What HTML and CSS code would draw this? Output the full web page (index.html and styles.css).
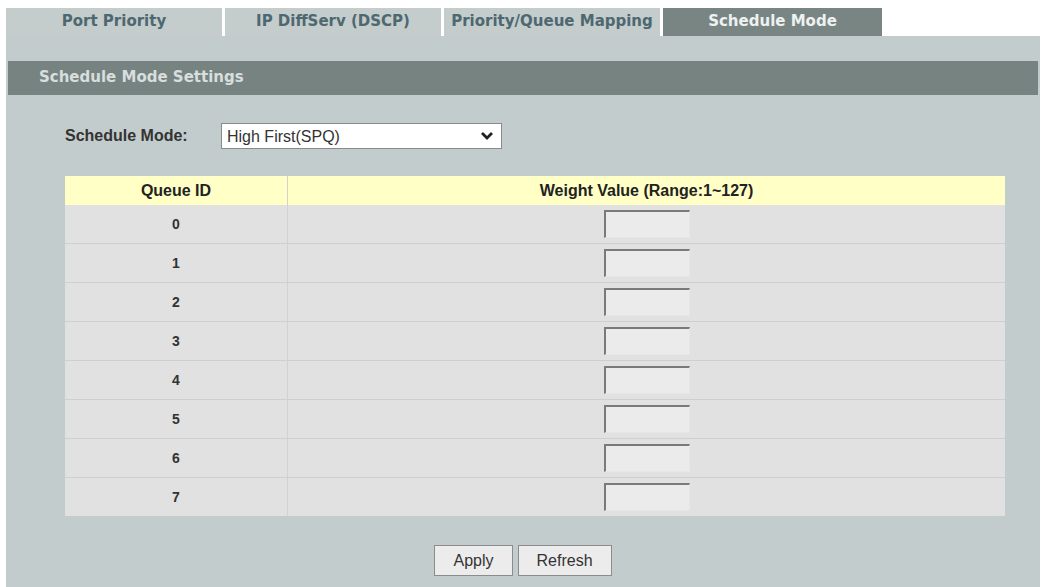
FILE: index.html
```html
<!DOCTYPE html>
<html lang="en">
<head>
  <meta charset="UTF-8">
  <meta name="viewport" content="width=device-width, initial-scale=1.0">
  <title>Schedule Mode</title>
  <link rel="stylesheet" href="styles.css">
</head>
<body>
  <div class="tabs">
    <div class="tab">Port Priority</div>
    <div class="tab">IP DiffServ (DSCP)</div>
    <div class="tab">Priority/Queue Mapping</div>
    <div class="tab active">Schedule Mode</div>
  </div>

  <div class="panel">
    <div class="panelTitulo">Schedule Mode Settings</div>

    <div class="filaModo">
      <label for="modo">Schedule Mode:</label>
      <div class="selectCaja">
        <select id="modo">
          <option>High First(SPQ)</option>
          <option>WRR</option>
        </select>
        <svg class="flecha" width="14" height="10" viewBox="0 0 14 10">
          <path d="M2 2 L7 7 L12 2" fill="none" stroke="#222" stroke-width="2.8"/>
        </svg>
      </div>
    </div>

    <table class="tablaColas">
      <thead>
        <tr>
          <th class="colId">Queue ID</th>
          <th>Weight Value (Range:1~127)</th>
        </tr>
      </thead>
      <tbody>
        <tr><td class="colId">0</td><td><input type="text"></td></tr>
        <tr><td class="colId">1</td><td><input type="text"></td></tr>
        <tr><td class="colId">2</td><td><input type="text"></td></tr>
        <tr><td class="colId">3</td><td><input type="text"></td></tr>
        <tr><td class="colId">4</td><td><input type="text"></td></tr>
        <tr><td class="colId">5</td><td><input type="text"></td></tr>
        <tr><td class="colId">6</td><td><input type="text"></td></tr>
        <tr><td class="colId">7</td><td><input type="text"></td></tr>
      </tbody>
    </table>

    <div class="botones">
      <button>Apply</button>
      <button>Refresh</button>
    </div>
  </div>
</body>
</html>
```

FILE: styles.css
```css
body {
  margin: 0;
  background: #ffffff;
  font-family: "Liberation Sans", Arial, sans-serif;
}

.tabs {
  display: flex;
  gap: 3px;
  margin: 8px 0 0 6px;
}
.tab {
  width: 216px;
  height: 28px;
  line-height: 27px;
  text-align: center;
  background: #c4cccc;
  color: #4d6870;
  font-family: "DejaVu Sans", Verdana, sans-serif;
  font-weight: bold;
  font-size: 15px;
}
.tab.active {
  width: 219px;
  background: #798583;
  color: #eef1f1;
}

.panel {
  margin: 0 3px 0 6px;
  background: #c3cccc;
  padding: 25px 2px 40px 2px;
}
.panelTitulo {
  background: #768381;
  color: #d8dede;
  height: 34px;
  line-height: 33px;
  padding-left: 31px;
  font-family: "DejaVu Sans", Verdana, sans-serif;
  font-weight: bold;
  font-size: 15px;
}

.filaModo {
  display: flex;
  align-items: center;
  margin: 28px 0 0 57px;
}
.filaModo label {
  width: 156px;
  font-weight: bold;
  font-size: 16px;
  color: #333;
}
.selectCaja {
  position: relative;
}
.selectCaja select {
  appearance: none;
  width: 281px;
  height: 26px;
  border: 1px solid #8a8a8a;
  background: #ffffff;
  font-family: "Liberation Sans", Arial, sans-serif;
  font-size: 16px;
  color: #333;
  padding: 0 0 0 5px;
  border-radius: 0;
}
.flecha {
  position: absolute;
  right: 8px;
  top: 8px;
}

.tablaColas {
  border-collapse: collapse;
  width: 940px;
  margin: 27px 0 0 57px;
  background: #e1e1e1;
}
.tablaColas th {
  background: #ffffc6;
  height: 29px;
  padding: 0;
  font-size: 16px;
  color: #222;
  text-align: center;
}
.tablaColas td {
  height: 38px;
  padding: 0;
  text-align: center;
  border-bottom: 1px solid #cfcfcf;
  font-weight: bold;
  font-size: 14px;
  color: #333;
}
.tablaColas tr:last-child td {
  border-bottom: none;
}
.tablaColas .colId {
  width: 222px;
  border-right: 1px solid #d2d2d2;
}
.tablaColas input {
  box-sizing: border-box;
  width: 86px;
  height: 28px;
  margin: 0;
  background: #ebebeb;
  border: 1px solid #e6e6e6;
  border-top: 2px solid #7a7a7a;
  border-left: 2px solid #7a7a7a;
  vertical-align: middle;
}

.botones {
  display: flex;
  justify-content: center;
  gap: 5px;
  margin-top: 29px;
}
.botones button {
  height: 31px;
  padding: 0 18px;
  background: #ececec;
  border: 1px solid #8c8c8c;
  font-family: "Liberation Sans", Arial, sans-serif;
  font-size: 16px;
  color: #333;
}
```
